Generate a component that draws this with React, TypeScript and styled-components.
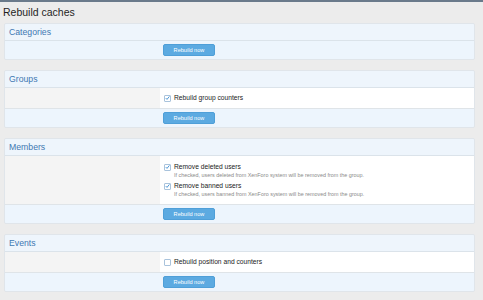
import React from "react";
import styled, { createGlobalStyle } from "styled-components";

const GlobalStyle = createGlobalStyle`
    html, body {
        margin: 0;
        padding: 0;
        background: #ececec;
        font-family: "Liberation Sans", Arial, sans-serif;
    }
`

const Page = styled.div`
    width: 483px;
    min-height: 300px;
    border-top: 2px solid #6a7a8b;
    box-sizing: border-box;
`

const Title = styled.h1`
    margin: 0;
    height: 21px;
    padding-left: 3px;
    font-size: 10.5px;
    font-weight: normal;
    color: #1f1f1f;
    line-height: 20px;
`

const Section = styled.section`
    margin: 0 8px 10px 4px;
    border: 1px solid #e0e5ea;
    border-radius: 2px;
    overflow: hidden;
`

const Header = styled.h2`
    margin: 0;
    height: 16px;
    padding-left: 4px;
    display: flex;
    align-items: center;
    background: #eef5fc;
    border-bottom: 1px solid #dbe3ea;
    font-size: 8.7px;
    font-weight: normal;
    color: #3f78b2;
`

const FormRow = styled.div`
    display: grid;
    grid-template-columns: 155px 1fr;
    border-bottom: 1px solid #dfe4e8;
`

const LabelCell = styled.div`
    background: #f4f4f4;
`

const InputCell = styled.div<{ $tall?: boolean }>`
    background: #ffffff;
    padding: ${p => (p.$tall ? "7px 0 6px 4px" : "6px 0 6px 4px")};
    display: flex;
    flex-direction: column;
    gap: 3px;
`

const Option = styled.label`
    display: grid;
    grid-template-columns: 7px 1fr;
    column-gap: 3px;
    align-items: center;
`

const Box = styled.span<{ $checked?: boolean }>`
    width: 7px;
    height: 7px;
    box-sizing: border-box;
    border: 1px solid #a9c3dc;
    border-radius: 1px;
    background: #fff;
    display: flex;
    align-items: center;
    justify-content: center;
`

const OptionText = styled.span`
    font-size: 6.7px;
    color: #222;
    line-height: 8px;
`

const Hint = styled.span`
    grid-column: 2;
    font-size: 5.4px;
    color: #8a8a8a;
    line-height: 7px;
    margin-top: 1px;
`

const ButtonRow = styled.div`
    height: 18px;
    padding-left: 158px;
    display: flex;
    align-items: center;
    background: #edf5fd;
`

const Button = styled.button`
    width: 52px;
    height: 12px;
    padding: 0;
    border: 1px solid #4f9fd8;
    border-radius: 2px;
    background: #5caae1;
    color: #fff;
    font-family: inherit;
    font-size: 5.6px;
    line-height: 10px;
    cursor: pointer;
`

const Check: React.FC<{ checked?: boolean }> = ({ checked }) => (
    <Box $checked={checked}>
        {checked && (
            <svg width="6" height="6" viewBox="0 0 10 10">
                <path d="M1.5 5.2 L4 7.8 L8.8 1.8" fill="none" stroke="#3b8dd3" strokeWidth="1.8" />
            </svg>
        )}
    </Box>
)

type Opt = { label: string; hint?: string; checked: boolean };

const sections: { title: string; options: Opt[] }[] = [
    { title: "Categories", options: [] },
    { title: "Groups", options: [{ label: "Rebuild group counters", checked: true }] },
    {
        title: "Members",
        options: [
            { label: "Remove deleted users", hint: "If checked, users deleted from XenForo system will be removed from the group.", checked: true },
            { label: "Remove banned users", hint: "If checked, users banned from XenForo system will be removed from the group.", checked: true },
        ],
    },
    { title: "Events", options: [{ label: "Rebuild position and counters", checked: false }] },
];

const App: React.FC = () => {
    return (
        <Page>
            <GlobalStyle />
            <Title>Rebuild caches</Title>
            {sections.map(s => (
                <Section key={s.title}>
                    <Header>{s.title}</Header>
                    {s.options.length > 0 && (
                        <FormRow>
                            <LabelCell />
                            <InputCell $tall={s.options.length > 1}>
                                {s.options.map(o => (
                                    <Option key={o.label}>
                                        <Check checked={o.checked} />
                                        <OptionText>{o.label}</OptionText>
                                        {o.hint && <Hint>{o.hint}</Hint>}
                                    </Option>
                                ))}
                            </InputCell>
                        </FormRow>
                    )}
                    <ButtonRow>
                        <Button>Rebuild now</Button>
                    </ButtonRow>
                </Section>
            ))}
        </Page>
    );
};

export default App;
